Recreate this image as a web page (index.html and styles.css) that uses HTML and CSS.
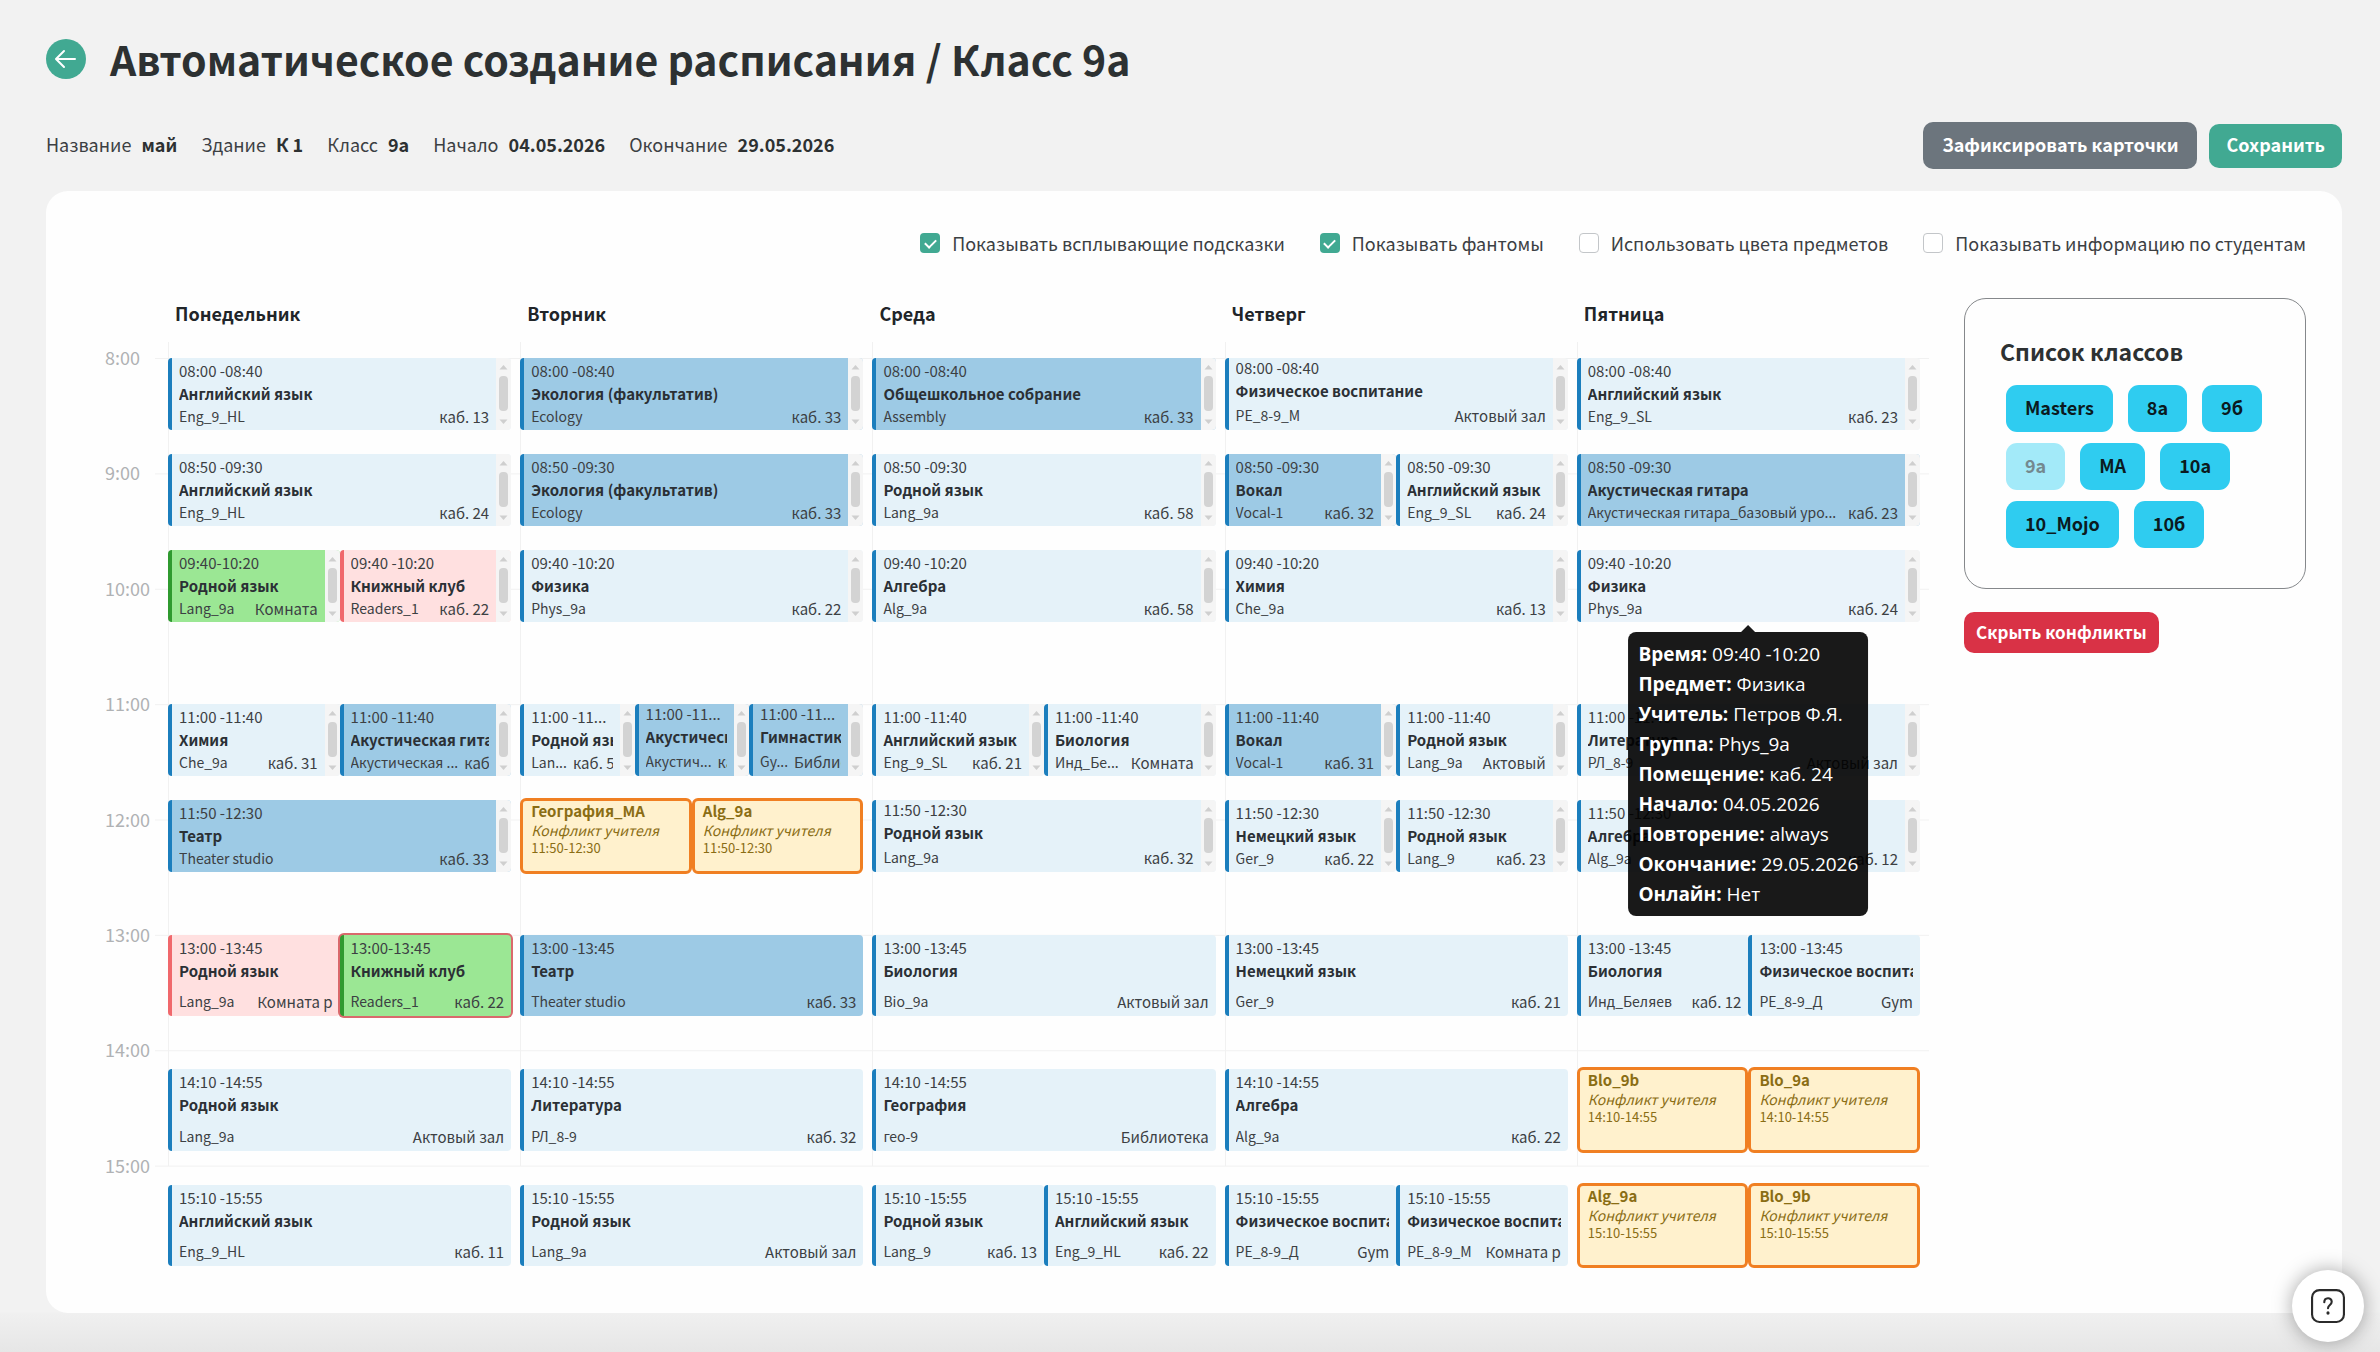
FILE: index.html
```html
<!DOCTYPE html>
<html lang="ru">
<head>
    <meta charset="UTF-8">
    <meta name="viewport" content="width=device-width, initial-scale=1.0">
    <title>Автоматическое создание расписания</title>
    <link rel="stylesheet" href="styles.css">
</head>
<body>
    <svg class="sprite" aria-hidden="true">
        <symbol id="bar" viewBox="0 0 15 72">
            <path d="M7.5 7 L11.5 11.5 H3.5 Z M7.5 66 L11.5 61.5 H3.5 Z" fill="#cfcfcf"/>
            <rect x="3" y="18" width="9" height="35" rx="4" fill="#d3d3d3"/>
        </symbol>
    </svg>

    <header class="page-header">
        <a class="back" href="#" aria-label="Назад">
            <svg viewBox="0 0 40 40" width="40" height="40" fill="none" stroke="#fff" stroke-width="2" stroke-linecap="round" stroke-linejoin="round"><path d="M29 20H11M18 12l-8 8 8 8"/></svg>
        </a>
        <h1>Автоматическое создание расписания / Класс 9а</h1>
    </header>

    <div class="toolbar">
        <ul class="meta">
            <li>Название <b>май</b></li>
            <li>Здание <b>К 1</b></li>
            <li>Класс <b>9а</b></li>
            <li>Начало <b>04.05.2026</b></li>
            <li>Окончание <b>29.05.2026</b></li>
        </ul>
        <div class="actions">
            <button class="btn btn-grey" type="button">Зафиксировать карточки</button>
            <button class="btn btn-green" type="button">Сохранить</button>
        </div>
    </div>

    <main class="panel">
        <div class="options">
            <label><input type="checkbox" checked>Показывать всплывающие подсказки</label>
            <label><input type="checkbox" checked>Показывать фантомы</label>
            <label><input type="checkbox">Использовать цвета предметов</label>
            <label><input type="checkbox">Показывать информацию по студентам</label>
        </div>

        <div class="content">
            <section class="schedule">
                <div class="day-names">
                    <span>Понедельник</span><span>Вторник</span><span>Среда</span><span>Четверг</span><span>Пятница</span>
                </div>
                <div class="timeline">
                    <div class="hours">
                        <span>8:00</span><span>9:00</span><span>10:00</span><span>11:00</span><span>12:00</span><span>13:00</span><span>14:00</span><span>15:00</span>
                    </div>
                    <div class="week">

                        <!-- Понедельник -->
                        <div class="day">
                            <div class="slot t0800">
                                <article class="event"><div class="body"><time>08:00 -08:40</time><h3>Английский язык</h3><p><span>Eng_9_HL</span><span class="room">каб. 13</span></p></div><svg class="bar"><use href="#bar"/></svg></article>
                            </div>
                            <div class="slot t0850">
                                <article class="event"><div class="body"><time>08:50 -09:30</time><h3>Английский язык</h3><p><span>Eng_9_HL</span><span class="room">каб. 24</span></p></div><svg class="bar"><use href="#bar"/></svg></article>
                            </div>
                            <div class="slot t0940">
                                <article class="event green"><div class="body"><time>09:40-10:20</time><h3>Родной язык</h3><p><span>Lang_9a</span><span class="room">Комната</span></p></div><svg class="bar"><use href="#bar"/></svg></article>
                                <article class="event pink"><div class="body"><time>09:40 -10:20</time><h3>Книжный клуб</h3><p><span>Readers_1</span><span class="room">каб. 22</span></p></div><svg class="bar"><use href="#bar"/></svg></article>
                            </div>
                            <div class="slot t1100">
                                <article class="event"><div class="body"><time>11:00 -11:40</time><h3>Химия</h3><p><span>Che_9a</span><span class="room">каб. 31</span></p></div><svg class="bar"><use href="#bar"/></svg></article>
                                <article class="event blue"><div class="body"><time>11:00 -11:40</time><h3>Акустическая гитара</h3><p><span>Акустическая ...</span><span class="room">каб. 32</span></p></div><svg class="bar"><use href="#bar"/></svg></article>
                            </div>
                            <div class="slot t1150">
                                <article class="event blue"><div class="body"><time>11:50 -12:30</time><h3>Театр</h3><p><span>Theater studio</span><span class="room">каб. 33</span></p></div><svg class="bar"><use href="#bar"/></svg></article>
                            </div>
                            <div class="slot t1300">
                                <article class="event pink"><div class="body"><time>13:00 -13:45</time><h3>Родной язык</h3><p><span>Lang_9a</span><span class="room">Комната р</span></p></div></article>
                                <article class="event green outlined"><div class="body"><time>13:00-13:45</time><h3>Книжный клуб</h3><p><span>Readers_1</span><span class="room">каб. 22</span></p></div></article>
                            </div>
                            <div class="slot t1410">
                                <article class="event"><div class="body"><time>14:10 -14:55</time><h3>Родной язык</h3><p><span>Lang_9a</span><span class="room">Актовый зал</span></p></div></article>
                            </div>
                            <div class="slot t1510">
                                <article class="event"><div class="body"><time>15:10 -15:55</time><h3>Английский язык</h3><p><span>Eng_9_HL</span><span class="room">каб. 11</span></p></div></article>
                            </div>
                        </div>

                        <!-- Вторник -->
                        <div class="day">
                            <div class="slot t0800">
                                <article class="event blue"><div class="body"><time>08:00 -08:40</time><h3>Экология (факультатив)</h3><p><span>Ecology</span><span class="room">каб. 33</span></p></div><svg class="bar"><use href="#bar"/></svg></article>
                            </div>
                            <div class="slot t0850">
                                <article class="event blue"><div class="body"><time>08:50 -09:30</time><h3>Экология (факультатив)</h3><p><span>Ecology</span><span class="room">каб. 33</span></p></div><svg class="bar"><use href="#bar"/></svg></article>
                            </div>
                            <div class="slot t0940">
                                <article class="event"><div class="body"><time>09:40 -10:20</time><h3>Физика</h3><p><span>Phys_9a</span><span class="room">каб. 22</span></p></div><svg class="bar"><use href="#bar"/></svg></article>
                            </div>
                            <div class="slot t1100">
                                <article class="event"><div class="body"><time>11:00 -11...</time><h3>Родной язык</h3><p><span>Lan...</span><span class="room">каб. 58</span></p></div><svg class="bar"><use href="#bar"/></svg></article>
                                <article class="event blue scrolled"><div class="body"><time>11:00 -11...</time><h3>Акустическая гитара</h3><p><span>Акустич...</span><span class="room">каб. 32</span></p></div><svg class="bar"><use href="#bar"/></svg></article>
                                <article class="event blue scrolled"><div class="body"><time>11:00 -11...</time><h3>Гимнастика</h3><p><span>Gy...</span><span class="room">Библиотека</span></p></div><svg class="bar"><use href="#bar"/></svg></article>
                            </div>
                            <div class="slot t1150">
                                <article class="conflict"><h3>География_МА</h3><em>Конфликт учителя</em><time>11:50-12:30</time></article>
                                <article class="conflict"><h3>Alg_9a</h3><em>Конфликт учителя</em><time>11:50-12:30</time></article>
                            </div>
                            <div class="slot t1300">
                                <article class="event blue"><div class="body"><time>13:00 -13:45</time><h3>Театр</h3><p><span>Theater studio</span><span class="room">каб. 33</span></p></div></article>
                            </div>
                            <div class="slot t1410">
                                <article class="event"><div class="body"><time>14:10 -14:55</time><h3>Литература</h3><p><span>РЛ_8-9</span><span class="room">каб. 32</span></p></div></article>
                            </div>
                            <div class="slot t1510">
                                <article class="event"><div class="body"><time>15:10 -15:55</time><h3>Родной язык</h3><p><span>Lang_9a</span><span class="room">Актовый зал</span></p></div></article>
                            </div>
                        </div>

                        <!-- Среда -->
                        <div class="day">
                            <div class="slot t0800">
                                <article class="event blue"><div class="body"><time>08:00 -08:40</time><h3>Общешкольное собрание</h3><p><span>Assembly</span><span class="room">каб. 33</span></p></div><svg class="bar"><use href="#bar"/></svg></article>
                            </div>
                            <div class="slot t0850">
                                <article class="event"><div class="body"><time>08:50 -09:30</time><h3>Родной язык</h3><p><span>Lang_9a</span><span class="room">каб. 58</span></p></div><svg class="bar"><use href="#bar"/></svg></article>
                            </div>
                            <div class="slot t0940">
                                <article class="event"><div class="body"><time>09:40 -10:20</time><h3>Алгебра</h3><p><span>Alg_9a</span><span class="room">каб. 58</span></p></div><svg class="bar"><use href="#bar"/></svg></article>
                            </div>
                            <div class="slot t1100">
                                <article class="event"><div class="body"><time>11:00 -11:40</time><h3>Английский язык</h3><p><span>Eng_9_SL</span><span class="room">каб. 21</span></p></div><svg class="bar"><use href="#bar"/></svg></article>
                                <article class="event"><div class="body"><time>11:00 -11:40</time><h3>Биология</h3><p><span>Инд_Бе...</span><span class="room">Комната</span></p></div><svg class="bar"><use href="#bar"/></svg></article>
                            </div>
                            <div class="slot t1150">
                                <article class="event scrolled"><div class="body"><time>11:50 -12:30</time><h3>Родной язык</h3><p><span>Lang_9a</span><span class="room">каб. 32</span></p></div><svg class="bar"><use href="#bar"/></svg></article>
                            </div>
                            <div class="slot t1300">
                                <article class="event"><div class="body"><time>13:00 -13:45</time><h3>Биология</h3><p><span>Bio_9a</span><span class="room">Актовый зал</span></p></div></article>
                            </div>
                            <div class="slot t1410">
                                <article class="event"><div class="body"><time>14:10 -14:55</time><h3>География</h3><p><span>гео-9</span><span class="room">Библиотека</span></p></div></article>
                            </div>
                            <div class="slot t1510">
                                <article class="event"><div class="body"><time>15:10 -15:55</time><h3>Родной язык</h3><p><span>Lang_9</span><span class="room">каб. 13</span></p></div></article>
                                <article class="event"><div class="body"><time>15:10 -15:55</time><h3>Английский язык</h3><p><span>Eng_9_HL</span><span class="room">каб. 22</span></p></div></article>
                            </div>
                        </div>

                        <!-- Четверг -->
                        <div class="day">
                            <div class="slot t0800">
                                <article class="event scrolled"><div class="body"><time>08:00 -08:40</time><h3>Физическое воспитание</h3><p><span>PE_8-9_M</span><span class="room">Актовый зал</span></p></div><svg class="bar"><use href="#bar"/></svg></article>
                            </div>
                            <div class="slot t0850">
                                <article class="event blue"><div class="body"><time>08:50 -09:30</time><h3>Вокал</h3><p><span>Vocal-1</span><span class="room">каб. 32</span></p></div><svg class="bar"><use href="#bar"/></svg></article>
                                <article class="event"><div class="body"><time>08:50 -09:30</time><h3>Английский язык</h3><p><span>Eng_9_SL</span><span class="room">каб. 24</span></p></div><svg class="bar"><use href="#bar"/></svg></article>
                            </div>
                            <div class="slot t0940">
                                <article class="event"><div class="body"><time>09:40 -10:20</time><h3>Химия</h3><p><span>Che_9a</span><span class="room">каб. 13</span></p></div><svg class="bar"><use href="#bar"/></svg></article>
                            </div>
                            <div class="slot t1100">
                                <article class="event blue"><div class="body"><time>11:00 -11:40</time><h3>Вокал</h3><p><span>Vocal-1</span><span class="room">каб. 31</span></p></div><svg class="bar"><use href="#bar"/></svg></article>
                                <article class="event"><div class="body"><time>11:00 -11:40</time><h3>Родной язык</h3><p><span>Lang_9a</span><span class="room">Актовый</span></p></div><svg class="bar"><use href="#bar"/></svg></article>
                            </div>
                            <div class="slot t1150">
                                <article class="event"><div class="body"><time>11:50 -12:30</time><h3>Немецкий язык</h3><p><span>Ger_9</span><span class="room">каб. 22</span></p></div><svg class="bar"><use href="#bar"/></svg></article>
                                <article class="event"><div class="body"><time>11:50 -12:30</time><h3>Родной язык</h3><p><span>Lang_9</span><span class="room">каб. 23</span></p></div><svg class="bar"><use href="#bar"/></svg></article>
                            </div>
                            <div class="slot t1300">
                                <article class="event"><div class="body"><time>13:00 -13:45</time><h3>Немецкий язык</h3><p><span>Ger_9</span><span class="room">каб. 21</span></p></div></article>
                            </div>
                            <div class="slot t1410">
                                <article class="event"><div class="body"><time>14:10 -14:55</time><h3>Алгебра</h3><p><span>Alg_9a</span><span class="room">каб. 22</span></p></div></article>
                            </div>
                            <div class="slot t1510">
                                <article class="event"><div class="body"><time>15:10 -15:55</time><h3>Физическое воспитание</h3><p><span>PE_8-9_Д</span><span class="room">Gym</span></p></div></article>
                                <article class="event"><div class="body"><time>15:10 -15:55</time><h3>Физическое воспитание</h3><p><span>PE_8-9_M</span><span class="room">Комната р</span></p></div></article>
                            </div>
                        </div>

                        <!-- Пятница -->
                        <div class="day">
                            <div class="slot t0800">
                                <article class="event"><div class="body"><time>08:00 -08:40</time><h3>Английский язык</h3><p><span>Eng_9_SL</span><span class="room">каб. 23</span></p></div><svg class="bar"><use href="#bar"/></svg></article>
                            </div>
                            <div class="slot t0850">
                                <article class="event blue"><div class="body"><time>08:50 -09:30</time><h3>Акустическая гитара</h3><p><span>Акустическая гитара_базовый уро...</span><span class="room">каб. 23</span></p></div><svg class="bar"><use href="#bar"/></svg></article>
                            </div>
                            <div class="slot t0940">
                                <article class="event hovered" aria-describedby="tip"><div class="body"><time>09:40 -10:20</time><h3>Физика</h3><p><span>Phys_9a</span><span class="room">каб. 24</span></p></div><svg class="bar"><use href="#bar"/></svg></article>
                                <div class="tooltip" id="tip" role="tooltip">
                                    <div><b>Время:</b> 09:40 -10:20</div>
                                    <div><b>Предмет:</b> Физика</div>
                                    <div><b>Учитель:</b> Петров Ф.Я.</div>
                                    <div><b>Группа:</b> Phys_9a</div>
                                    <div><b>Помещение:</b> каб. 24</div>
                                    <div><b>Начало:</b> 04.05.2026</div>
                                    <div><b>Повторение:</b> always</div>
                                    <div><b>Окончание:</b> 29.05.2026</div>
                                    <div><b>Онлайн:</b> Нет</div>
                                </div>
                            </div>
                            <div class="slot t1100">
                                <article class="event"><div class="body"><time>11:00 -11:40</time><h3>Литература</h3><p><span>РЛ_8-9</span><span class="room">Актовый зал</span></p></div><svg class="bar"><use href="#bar"/></svg></article>
                            </div>
                            <div class="slot t1150">
                                <article class="event"><div class="body"><time>11:50 -12:30</time><h3>Алгебра</h3><p><span>Alg_9a</span><span class="room">каб. 12</span></p></div><svg class="bar"><use href="#bar"/></svg></article>
                            </div>
                            <div class="slot t1300">
                                <article class="event"><div class="body"><time>13:00 -13:45</time><h3>Биология</h3><p><span>Инд_Беляев</span><span class="room">каб. 12</span></p></div></article>
                                <article class="event"><div class="body"><time>13:00 -13:45</time><h3>Физическое воспитание</h3><p><span>PE_8-9_Д</span><span class="room">Gym</span></p></div></article>
                            </div>
                            <div class="slot t1410">
                                <article class="conflict"><h3>Blo_9b</h3><em>Конфликт учителя</em><time>14:10-14:55</time></article>
                                <article class="conflict"><h3>Blo_9a</h3><em>Конфликт учителя</em><time>14:10-14:55</time></article>
                            </div>
                            <div class="slot t1510">
                                <article class="conflict"><h3>Alg_9a</h3><em>Конфликт учителя</em><time>15:10-15:55</time></article>
                                <article class="conflict"><h3>Blo_9b</h3><em>Конфликт учителя</em><time>15:10-15:55</time></article>
                            </div>
                        </div>
                    </div>
                </div>
            </section>

            <aside class="side">
                <div class="classes">
                    <h2>Список классов</h2>
                    <div class="chips">
                        <button type="button">Masters</button>
                        <button type="button">8а</button>
                        <button type="button">9б</button>
                        <button type="button" disabled>9а</button>
                        <button type="button">МА</button>
                        <button type="button">10а</button>
                        <button type="button">10_Mojo</button>
                        <button type="button">10б</button>
                    </div>
                </div>
                <button class="btn btn-red" type="button">Скрыть конфликты</button>
            </aside>
        </div>
    </main>

    <button class="help" type="button" aria-label="Помощь">
        <svg viewBox="0 0 32 32" width="34" height="34" fill="none" stroke="#2b2b2b" stroke-width="2" stroke-linecap="round" stroke-linejoin="round">
            <rect x="1" y="1" width="30" height="30" rx="7"/>
            <path d="M12.5 12.5c0-5 7-5 7-.5 0 3-3.500 3-3.500 6"/>
            <path d="M16 22.500v.2" stroke-width="3"/>
        </svg>
    </button>
</body>
</html>
```
FILE: styles.css
```css
* {
    box-sizing: border-box;
}
body {
    margin: 0;
    min-height: 100vh;
    padding: 34px 38px 39px 46px;
    background: linear-gradient(to top, #e6e6e6, #f0f0f0 39px, #f2f2f2 40px);
    font-family: "Noto Sans CJK SC", "Noto Sans", sans-serif;
    font-size: 18px;
    color: #3c4043;
}
h1, h2, h3, p, ul {
    margin: 0;
    padding: 0;
}
button {
    font-family: inherit;
    border: none;
    cursor: pointer;
}
.sprite {
    position: absolute;
    width: 0;
    height: 0;
}

/* header */
.page-header {
    display: flex;
    align-items: center;
    gap: 24px;
    height: 50px;
}
.back {
    width: 40px;
    height: 40px;
    border-radius: 50%;
    background: #41a992;
}
h1 {
    padding-bottom: 3px;
    font-size: 41px;
    line-height: 50px;
    color: #2d3132;
}
.toolbar {
    display: flex;
    justify-content: space-between;
    align-items: center;
    height: 47px;
    margin-top: 38px;
}
.meta {
    display: flex;
    gap: 24px;
    padding-bottom: 3px;
    list-style: none;
}
.meta b {
    margin-left: 6px;
    color: #2d3132;
}
.actions {
    display: flex;
    align-items: center;
    gap: 12px;
}
.btn {
    height: 44px;
    padding: 0 17px 3px;
    border-radius: 10px;
    color: #fff;
    font-size: 18px;
    font-weight: bold;
}
.btn-grey {
    height: 47px;
    padding: 0 19px 3px;
    background: #6c757d;
}
.btn-green {
    background: #41a992;
}
.btn-red {
    height: 41px;
    padding: 0 12px 3px;
    margin-top: 23px;
    background: #d93246;
    font-size: 17px;
}

/* panel */
.panel {
    margin-top: 22px;
    padding: 34px 36px 32px 59px;
    border-radius: 22px;
    background: #fefefe;
}
.options {
    display: flex;
    justify-content: flex-end;
    gap: 35px;
    height: 36px;
}
.options label {
    display: flex;
    align-items: center;
    gap: 12px;
}
.options input {
    appearance: none;
    width: 20px;
    height: 20px;
    margin: 0;
    border: 1px solid #c3c6c9;
    border-radius: 4px;
    background: #fff;
}
.options input:checked {
    border: none;
    background: #41a992;
}
.options input:checked::before {
    content: "";
    display: block;
    width: 5px;
    height: 9px;
    margin: 4px auto 0;
    border: solid #fff;
    border-width: 0 2px 2px 0;
    transform: rotate(45deg);
}
.content {
    display: flex;
    align-items: flex-start;
    gap: 35px;
    margin-top: 37px;
}
.schedule {
    flex: 1;
    min-width: 0;
}
.day-names {
    display: grid;
    grid-template-columns: repeat(5, 1fr);
    margin-bottom: 30px;
    padding-left: 63px;
    line-height: 30px;
    font-size: 18px;
    font-weight: bold;
    color: #212529;
}
.day-names span {
    padding-left: 7px;
}
.timeline {
    display: flex;
    height: 923px;
}
.hours {
    display: grid;
    grid-template-rows: repeat(8, 1fr);
    width: 50px;
    font-size: 18px;
    line-height: 24px;
    color: #b0b2b4;
}
.hours span {
    margin-top: -13px;
}
.week {
    flex: 1;
    min-width: 0;
    display: grid;
    grid-template-columns: repeat(5, minmax(0, 1fr));
    grid-template-rows: minmax(0, 1fr);
    padding-left: 13px;
    background: linear-gradient(#f1f1f1 1px, transparent 1px) 0 0 / 100% 12.5%;
}
.day {
    position: relative;
    display: grid;
    grid-template-rows: repeat(96, minmax(0, 1fr)); /* 5 minutes per row */
    padding-right: 9px;
}
.day::before {
    content: "";
    position: absolute;
    top: -16px;
    bottom: 12.5%;
    left: 0;
    border-left: 1px solid #f1f1f1;
}
.slot {
    position: relative;
    display: grid;
    grid-auto-flow: column;
    grid-auto-columns: minmax(0, 1fr);
    grid-template-rows: minmax(0, 1fr);
    margin-bottom: 5px;
}
.t0800 { grid-row: 1 / span 8; }
.t0850 { grid-row: 11 / span 8; }
.t0940 { grid-row: 21 / span 8; }
.t1100 { grid-row: 37 / span 8; }
.t1150 { grid-row: 47 / span 8; }
.t1300 { grid-row: 61 / span 9; }
.t1410 { grid-row: 75 / span 9; }
.t1510 { grid-row: 87 / span 9; }

/* lesson cards */
.event {
    display: flex;
    overflow: hidden;
    border-left: 4px solid #1b7ebd;
    border-radius: 4px;
    background: #e5f2f9;
    font-size: 15px;
    line-height: 23px;
    white-space: nowrap;
}
.body {
    flex: 1;
    min-width: 0;
    display: flex;
    flex-direction: column;
    padding: 1px 7px 3px;
}
.body > * {
    flex: none;
    overflow: hidden;
}
.event h3 {
    font-size: 15px;
    color: #2b3035;
}
.event p {
    display: flex;
    justify-content: space-between;
    gap: 6px;
    margin-top: auto;
    font-size: 14px;
}
.event p span {
    flex: none;
}
.event .room {
    font-size: 15px;
}
.scrolled .body {
    margin-top: -3px;
}
.blue {
    background: #9dcae5;
}
.green {
    border-color: #2f9a2f;
    background: #9be794;
}
.pink {
    border-color: #f0686c;
    background: #ffe0e0;
}
.hovered {
    background: #eaf3fa;
}
.outlined {
    box-shadow: 0 0 0 2px #d9696c;
}
.bar {
    flex: none;
    width: 15px;
    height: 100%;
    background: #f5f5f5;
}
.conflict {
    display: flex;
    flex-direction: column;
    overflow: hidden;
    margin: -2px 0;
    padding: 0 8px;
    border: 3px solid #f07f22;
    border-radius: 6px;
    background: #fff1cd;
    color: #8a6d14;
    font-size: 13px;
    line-height: 18px;
    white-space: nowrap;
}
.conflict h3 {
    font-size: 15px;
    line-height: 20px;
}
.conflict em {
    font-size: 14px;
}

.tooltip {
    position: absolute;
    top: calc(100% + 10px);
    left: 50%;
    z-index: 5;
    transform: translateX(-50%);
    padding: 7px 10px;
    border-radius: 8px;
    background: rgba(0, 0, 0, 0.9);
    color: #fff;
    font-family: "Open Sans", sans-serif;
    font-size: 19px;
    line-height: 30px;
    white-space: nowrap;
}
.tooltip::before {
    content: "";
    position: absolute;
    bottom: 100%;
    left: 50%;
    margin-left: -7px;
    border: 7px solid transparent;
    border-top: none;
    border-bottom-color: rgba(0, 0, 0, 0.9);
}

/* class list */
.side {
    width: 342px;
}
.classes {
    padding: 36px 35px 40px;
    border: 1px solid #85888b;
    border-radius: 22px;
}
h2 {
    font-size: 23px;
    line-height: 32px;
    color: #2d3132;
}
.chips {
    display: flex;
    flex-wrap: wrap;
    gap: 11px 15px;
    margin-top: 18px;
    padding-left: 6px;
}
.chips button {
    height: 47px;
    padding: 0 19px 3px;
    border-radius: 11px;
    background: #2fccf0;
    color: #0b1a20;
    font-size: 18px;
    font-weight: bold;
}
.chips button:disabled {
    background: #a3eaf9;
    color: #74898f;
}

.help {
    position: fixed;
    right: 16px;
    bottom: 10px;
    display: flex;
    align-items: center;
    justify-content: center;
    width: 72px;
    height: 72px;
    border-radius: 50%;
    background: #fff;
    box-shadow: 0 0 20px rgba(0, 0, 0, 0.35);
}
```
